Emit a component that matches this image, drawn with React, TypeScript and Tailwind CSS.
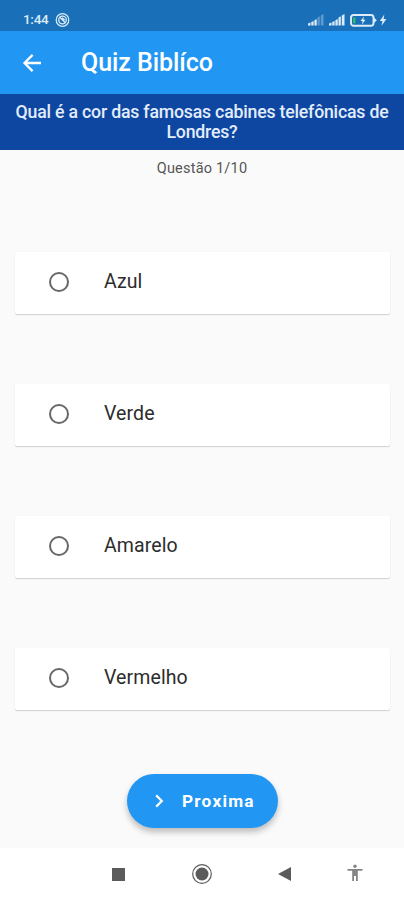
import { useState } from 'react';

const question = {
    text: 'Qual é a cor das famosas cabines telefônicas de Londres?',
    current: 1,
    total: 10,
    options: ['Azul', 'Verde', 'Amarelo', 'Vermelho'],
};

function StatusBar() {
    return (
        <div className="flex h-[31px] items-center justify-between bg-[#1a70b8] pl-[23px] pr-[17px] pt-[9px] text-[#dcecf9]">
            <div className="flex items-center gap-[6px]">
                <span className="w-[26px] whitespace-nowrap text-[13.5px] font-medium leading-none tracking-[-0.3px]">1:44</span>
                <svg width="15" height="15" viewBox="0 0 15 15" fill="none" stroke="currentColor">
                    <circle cx="7.5" cy="7" r="6.3" strokeWidth="1.2" />
                    <circle cx="7.5" cy="7" r="3.8" strokeWidth="1.3" />
                    <path d="M4.5 4L10 9.5M7 4.7L9.7 7.3" strokeWidth="1.2" />
                </svg>
            </div>
            <div className="flex items-center">
                <svg width="16" height="12" viewBox="0 0 16 12" fill="currentColor">
                    <path d="M0 9.5L2.5 8.5V11.5H0ZM3.3 8L5.6 7V11.5H3.3ZM6.4 6.2L8.7 5V11.5H6.4Z" />
                    <path d="M9.5 3.5L11.8 2.2V11.5H9.5ZM12.8 1.5L15.5 0V11.5H12.8Z" opacity="0.35" />
                </svg>
                <svg className="ml-[5px]" width="16" height="12" viewBox="0 0 16 12" fill="currentColor">
                    <path d="M0 9.5L2.5 8.5V11.5H0ZM3.3 8L5.6 7V11.5H3.3ZM6.4 6.2L8.7 5V11.5H6.4ZM9.5 3.5L11.8 2.2V11.5H9.5ZM12.8 1.5L15.5 0V11.5H12.8Z" />
                </svg>
                <svg className="ml-[5px]" width="27" height="13" viewBox="0 0 27 13">
                    <rect x="1" y="1" width="22.5" height="10.8" rx="2.5" fill="none" stroke="currentColor" strokeWidth="1.9" />
                    <path d="M24 3.5L26.8 6.3L24 9Z" fill="currentColor" />
                    <rect x="3" y="3.5" width="2.5" height="5.8" fill="#35b66b" />
                    <path d="M14 2.5L10.5 7H12.5L12 10.5L15.5 5.8H13.3Z" fill="currentColor" />
                </svg>
                <svg className="ml-[2px]" width="8" height="12" viewBox="0 0 8 12" fill="currentColor">
                    <path d="M5.3 0.5L0.8 7H3.4L2.6 11.8L7.4 5H4.6Z" />
                </svg>
            </div>
        </div>
    );
}

function AppBar() {
    return (
        <header className="flex h-[63px] items-center bg-[#2196f3] pl-[22px] text-white">
            <svg width="20" height="20" viewBox="0 0 20 20" fill="none" stroke="currentColor" strokeWidth="2.3">
                <path d="M19 10H2.5M10.6 1.9L2.5 10L10.6 18.1" />
            </svg>
            <h1 className="ml-[39px] text-[25px] font-medium leading-none tracking-[-0.07px]">Quiz Biblíco</h1>
        </header>
    );
}

interface OptionCardProps {
    label: string;
    selected: boolean;
    onSelect: () => void;
}

function OptionCard({ label, selected, onSelect }: OptionCardProps) {
    return (
        <button
            onClick={onSelect}
            className="flex h-[62px] w-full items-center rounded-[2px] bg-white pb-[2px] pl-[34px] text-left shadow-[0_1px_1px_rgba(0,0,0,0.17),0_0_2px_rgba(0,0,0,0.03)]"
        >
            <span className="flex size-5 items-center justify-center rounded-full border-2 border-[#686868]">
                {selected && <span className="size-2.5 rounded-full bg-[#2196f3]" />}
            </span>
            <span className="mb-[1px] ml-[35px] text-[19.5px] leading-none tracking-[0.1px] text-[#2c2c2c]">{label}</span>
        </button>
    );
}

function NavigationBar() {
    return (
        <nav className="flex h-[52px] items-center bg-white pl-[112px] text-[#5b5b5b]">
            <span className="size-[13px] bg-current" />
            <svg className="ml-[66px]" width="22" height="22" viewBox="0 0 22 22">
                <circle cx="11" cy="11" r="9.3" fill="none" stroke="currentColor" strokeWidth="1.2" />
                <circle cx="11" cy="11" r="6.5" fill="currentColor" />
            </svg>
            <svg className="ml-[65px]" width="13" height="14" viewBox="0 0 13 14" fill="currentColor">
                <path d="M0 7L13 0V14Z" />
            </svg>
            <svg className="ml-[56px] mb-[3px]" width="16" height="18" viewBox="0 0 16 18" fill="#858585">
                <circle cx="8" cy="2.3" r="1.7" />
                <path d="M0.5 5H15.5V6.8H10.8V17H9V12H7V17H5.2V6.8H0.5Z" />
            </svg>
        </nav>
    );
}

export default function App() {
    const [selected, setSelected] = useState<string | null>(null);

    return (
        <div className="flex h-[900px] w-[404px] flex-col overflow-hidden bg-[#fafafa] font-[Roboto,sans-serif]">
            <StatusBar />
            <AppBar />
            <div className="h-14 bg-[#0d47a1] pt-[8px] text-center text-[17.7px] font-medium leading-[20px] tracking-[-0.2px] text-[#e3edfb]">
                <p className="mx-auto w-[384px]">{question.text}</p>
            </div>
            <p className="mt-[10px] text-center text-[14.5px] leading-[18px] tracking-[0.2px] text-[#555]">
                Questão {question.current}/{question.total}
            </p>

            <main className="mt-[74px] flex flex-col gap-[70px] pl-[15px] pr-[14px]">
                {question.options.map((option) => (
                    <OptionCard
                        key={option}
                        label={option}
                        selected={selected === option}
                        onSelect={() => setSelected(option)}
                    />
                ))}
            </main>

            <button className="ml-[127px] mt-[64px] flex h-[54px] w-[151px] items-center rounded-full bg-[#2196f3] pl-[28px] text-white shadow-[0_4px_6px_rgba(0,0,0,0.25)]">
                <svg width="9" height="14" viewBox="0 0 9 14" fill="none" stroke="currentColor" strokeWidth="2.2">
                    <path d="M1.2 1.4L6.8 7L1.2 12.6" />
                </svg>
                <span className="ml-[18px] mt-[1px] text-[17.2px] font-bold leading-none tracking-[1.25px]">Proxima</span>
            </button>

            <div className="mt-auto">
                <NavigationBar />
            </div>
        </div>
    );
}
